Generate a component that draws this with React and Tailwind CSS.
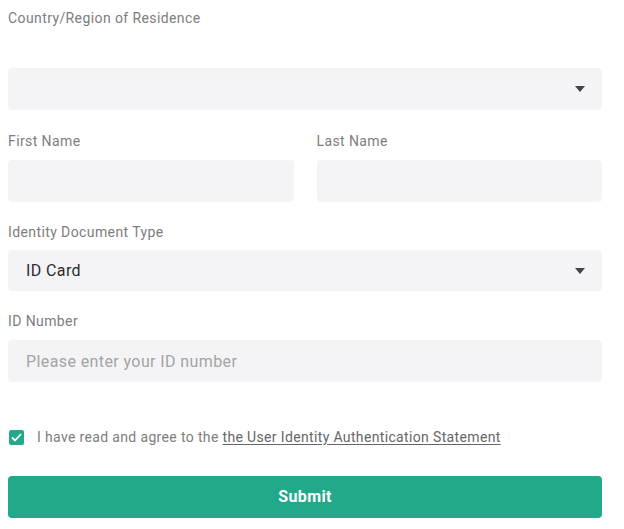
import React, { useState } from 'react';

const Caret = () => (
  <svg width="10" height="6" viewBox="0 0 10 6" className="shrink-0">
    <path d="M0 0 L10 0 L5 6 Z" fill="#444" />
  </svg>
);

const Label = ({ children, className = '' }) => (
  <div className={`text-[14px] leading-[20px] text-[#7d7d7d] ${className}`}>{children}</div>
);

const App = () => {
  const [agreed, setAgreed] = useState(true);
  const [idNumber, setIdNumber] = useState('');

  return (
    <div className="w-[624px] h-[529px] bg-white pl-[8px] pr-[22px] tracking-[0.4px] font-['Roboto','Noto_Sans',sans-serif]">
      {/* country */}
      <Label className="pt-[8px]">Country/Region of Residence</Label>
      <div className="mt-[40px] h-[42px] rounded-[4px] bg-[#f4f4f6] flex items-center justify-end pr-[17px]">
        <Caret />
      </div>

      {/* names */}
      <div className="mt-[21px] grid grid-cols-2 gap-[23px]">
        <div>
          <Label>First Name</Label>
          <input className="mt-[9px] block w-full h-[42px] rounded-[4px] bg-[#f4f4f6] outline-none px-[18px]" />
        </div>
        <div>
          <Label>Last Name</Label>
          <input className="mt-[9px] block w-full h-[42px] rounded-[4px] bg-[#f4f4f6] outline-none px-[18px]" />
        </div>
      </div>

      {/* document type */}
      <Label className="mt-[20px]">Identity Document Type</Label>
      <div className="mt-[8px] h-[41px] rounded-[4px] bg-[#f4f4f6] flex items-center justify-between pl-[18px] pr-[17px]">
        <span className="text-[16px] text-[#2c2c2c]">ID Card</span>
        <Caret />
      </div>

      {/* id number */}
      <Label className="mt-[20px]">ID Number</Label>
      <input
        value={idNumber}
        onChange={(e) => setIdNumber(e.target.value)}
        placeholder="Please enter your ID number"
        className="mt-[9px] block w-full h-[42px] rounded-[4px] bg-[#f4f4f6] outline-none px-[18px] text-[16px] tracking-[0.4px] text-[#2c2c2c] placeholder:text-[#a3a3a3]"
      />

      {/* agreement */}
      <div className="mt-[45px] flex items-center gap-[13px] pl-[1px]">
        <button
          onClick={() => setAgreed(!agreed)}
          className={`w-[15px] h-[15px] rounded-[2px] flex items-center justify-center ${agreed ? 'bg-[#22a98a]' : 'border border-[#ccc]'}`}
        >
          {agreed && (
            <svg width="11" height="9" viewBox="0 0 11 9">
              <path d="M1 4.5 L4 7.5 L10 1" stroke="white" strokeWidth="1.8" fill="none" />
            </svg>
          )}
        </button>
        <span className="text-[14px] tracking-[0.35px] text-[#7d7d7d]">
          I have read and agree to the{' '}
          <span className="underline underline-offset-2 text-[#666]">the User Identity Authentication Statement</span>
        </span>
      </div>

      <button className="mt-[28px] w-full h-[42px] rounded-[4px] bg-[#22a98a] text-white text-[16px] font-bold">
        Submit
      </button>
    </div>
  );
};

export default App;
